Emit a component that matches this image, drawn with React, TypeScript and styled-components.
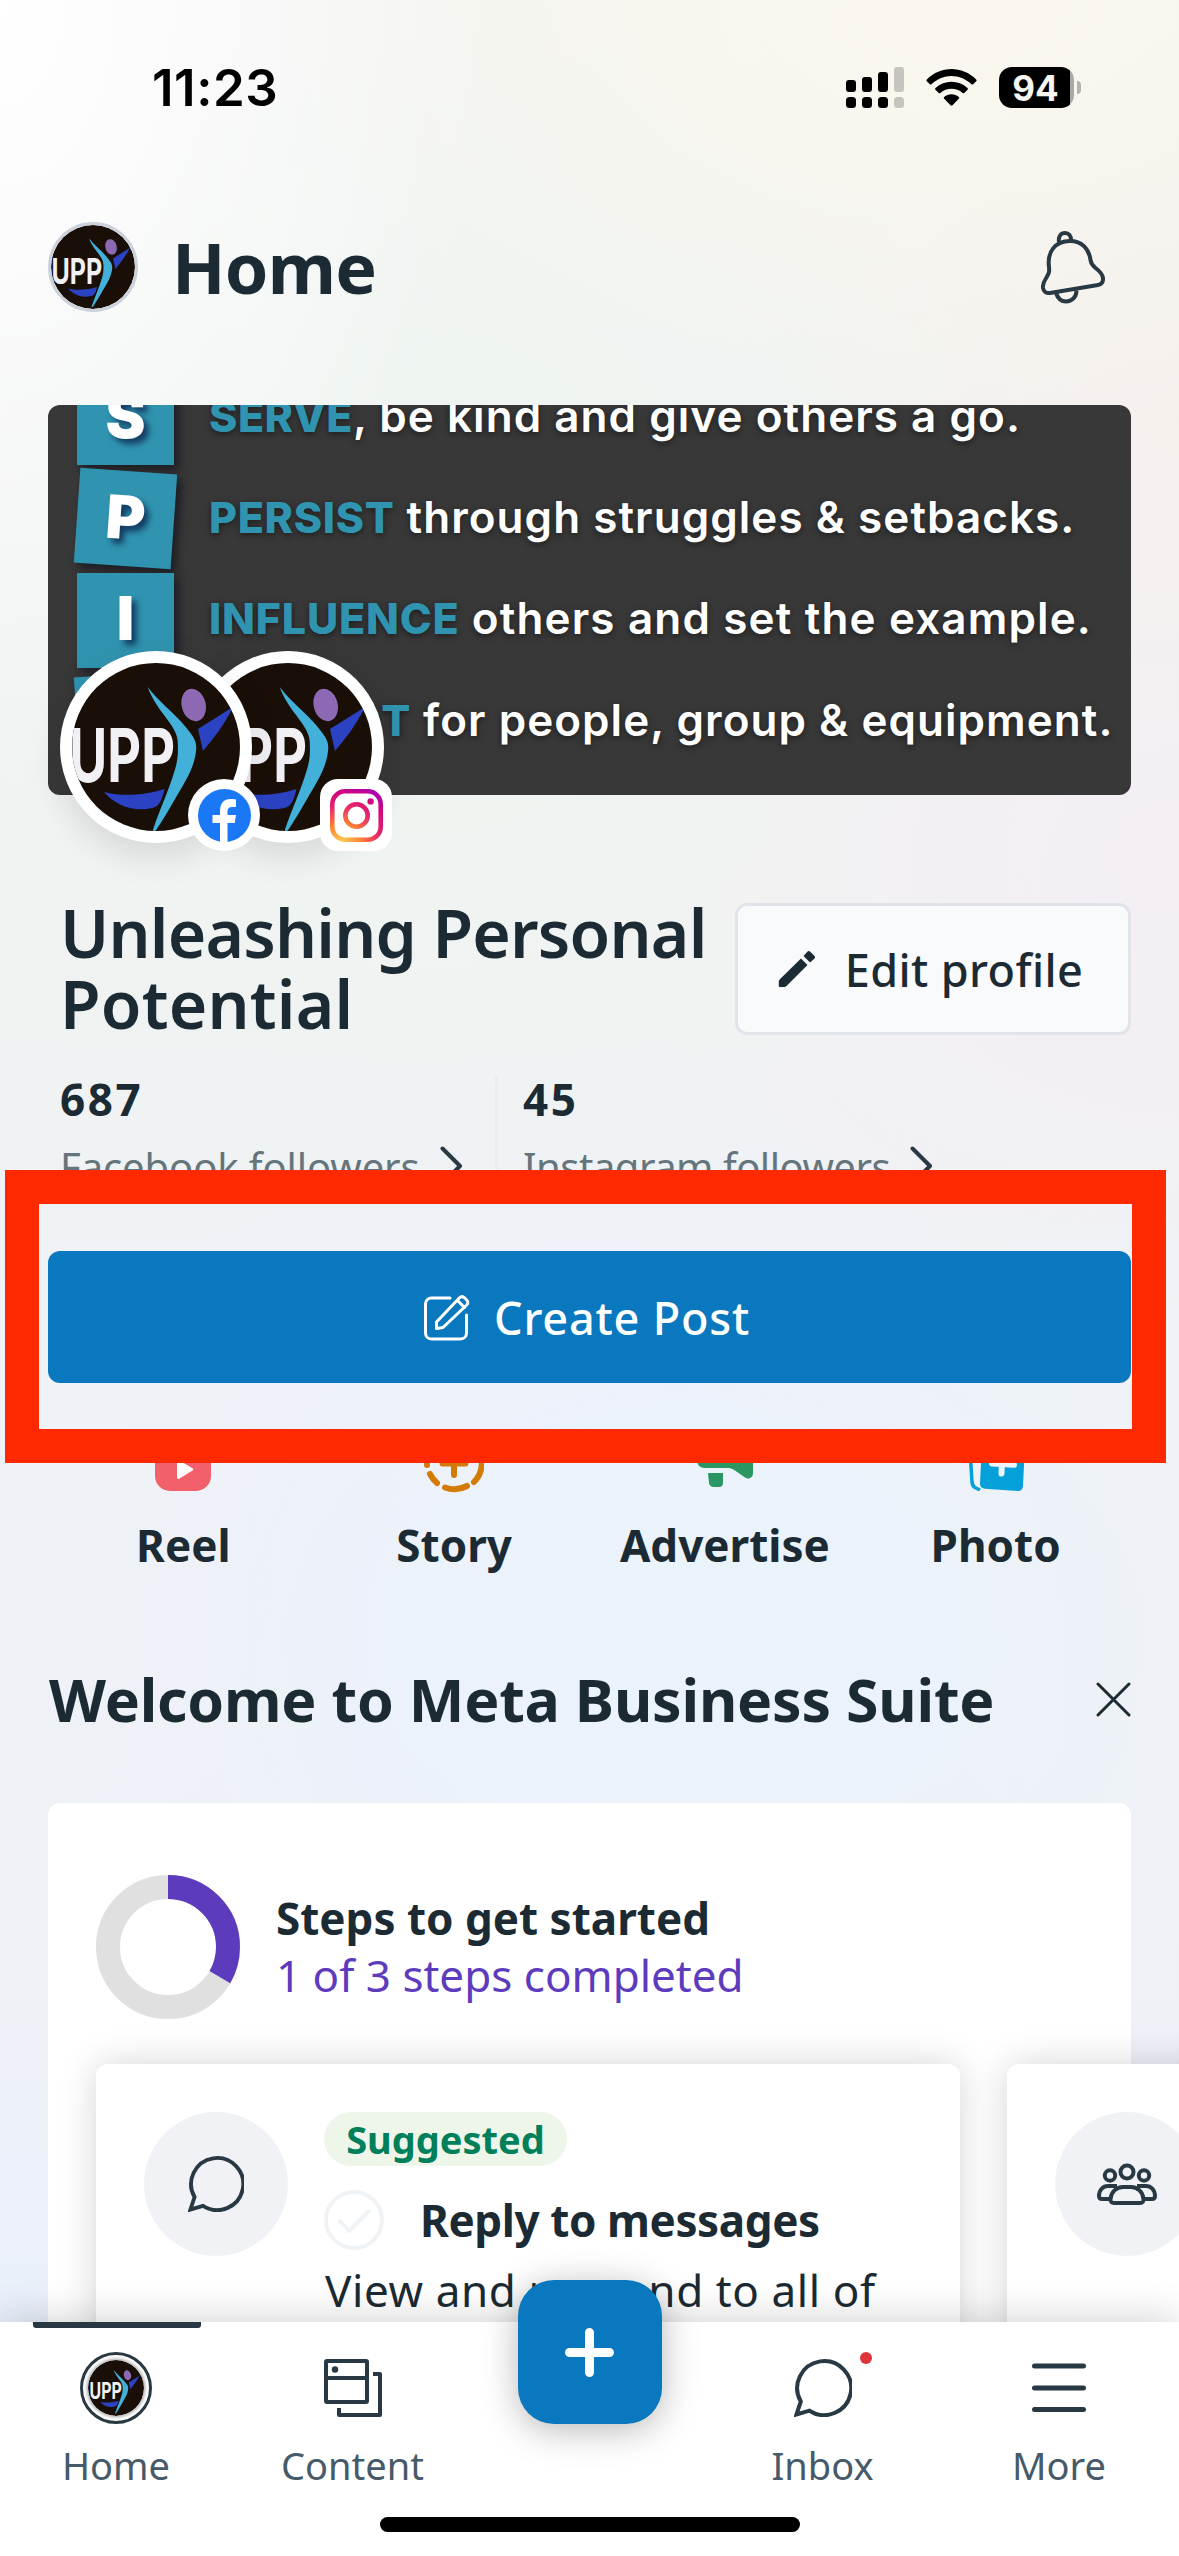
import React from 'react';
import styled, { createGlobalStyle } from 'styled-components';

// =============================================================================
// Constants
// =============================================================================

const INK = '#1c2b33';
const ICON = '#283943';
const MUTED = '#65757c';
const NAV_TEXT = '#465a69';
const BLUE = '#0a78be';
const PURPLE = '#5d3bbd';
const RED = '#ff2900';
const TEAL = '#3094b0';

const SANS = "'Noto Sans', 'Open Sans', sans-serif";
const SYSTEM = "'Inter', 'Liberation Sans', sans-serif";

// =============================================================================
// Styled Components
// =============================================================================

const GlobalStyle = createGlobalStyle`
  * {
    box-sizing: border-box;
  }

  body {
    margin: 0;
    font-family: ${SANS};
    color: ${INK};
  }

  p, h1, h2 {
    margin: 0;
  }

  svg {
    display: block;
    flex: none;
  }

  button {
    font: inherit;
    color: inherit;
    padding: 0;
    border: 0;
    background: none;
  }
`;

const Phone = styled.div`
  width: 1179px;
  height: 2556px;
  display: flex;
  flex-direction: column;
  overflow: hidden;
  background:
    radial-gradient(500px 800px at 0 0, #ffffff, rgba(255, 255, 255, 0) 100%),
    radial-gradient(700px 420px at 960px 0, #fbf7ed, rgba(251, 247, 237, 0) 100%),
    radial-gradient(380px 360px at 1179px 420px, #f6f0ed, rgba(246, 240, 237, 0) 100%),
    radial-gradient(600px 500px at 1179px 860px, #f4eef4, rgba(244, 238, 244, 0) 100%),
    radial-gradient(700px 700px at 420px 560px, #eef5f1, rgba(238, 245, 241, 0) 100%),
    radial-gradient(500px 360px at 700px 1630px, #eaf3fb, rgba(234, 243, 251, 0) 100%),
    radial-gradient(560px 700px at 590px 1720px, #edf1fb, rgba(237, 241, 251, 0) 100%),
    linear-gradient(#f3f4f2 0, #f1f2f1 900px, #eff2f6 1300px, #eef1f6 2000px, #eaf0fb 2322px);
`;

const Screen = styled.main`
  height: 2322px;
  padding: 0 48px;
  overflow: hidden;
`;

const StatusBar = styled.div`
  height: 174px;
  padding: 67px 50px 0 104px;
  display: flex;
  align-items: flex-start;
  justify-content: space-between;
  font-family: ${SYSTEM};
`;

const Clock = styled.span`
  font-size: 51px;
  font-weight: 600;
  line-height: 42px;
  letter-spacing: 0.5px;
  color: #000;
`;

const StatusIcons = styled.div`
  display: flex;
  align-items: flex-start;
  gap: 22px;
`;

const Battery = styled.div`
  display: flex;
  align-items: center;
  gap: 3px;
`;

const BatteryBody = styled.span`
  width: 75px;
  height: 41px;
  border-radius: 13px;
  background: linear-gradient(90deg, #000 71px, #a9a8a4 71px);
  color: #f6f5f0;
  font-size: 35px;
  font-weight: 700;
  line-height: 42px;
  text-align: center;
  padding-right: 2px;
`;

const BatteryCap = styled.span`
  width: 4px;
  height: 13px;
  border-radius: 0 6px 6px 0;
  background: #b5b4b0;
`;

const Header = styled.header`
  height: 186px;
  padding: 0 25px 0 0;
  display: flex;
  align-items: center;
`;

const HeaderAvatar = styled.div`
  width: 90px;
  height: 90px;
  border-radius: 50%;
  border: 3px solid #cbd2dc;
  overflow: hidden;
`;

const PageTitle = styled.h1`
  flex: 1;
  margin-left: 34px;
  font-size: 70px;
  font-weight: 700;
  line-height: 90px;
  letter-spacing: -0.8px;
`;

const CoverWrap = styled.section`
  position: relative;
  margin-top: 45px;
`;

const Cover = styled.div`
  height: 390px;
  border-radius: 12px;
  overflow: hidden;
  background: #383838;
`;

const CoverRows = styled.div`
  margin-top: -38px;
  display: flex;
  flex-direction: column;
  font-family: ${SYSTEM};
`;

const CoverRow = styled.div`
  height: 101.3px;
  padding-left: 29px;
  display: flex;
  align-items: center;
  gap: 35px;
`;

const Tile = styled.span<{ $tilt: number }>`
  width: 97px;
  height: 95px;
  flex: none;
  display: flex;
  align-items: center;
  justify-content: center;
  background: ${TEAL};
  box-shadow: 5px 5px 9px rgba(10, 12, 24, 0.6);
  color: #fff;
  font-size: 60px;
  font-weight: 900;
  line-height: 91px;
  padding-bottom: 3px;
  text-shadow: 5px 5px 6px #123a60;
  transform: rotate(${(props) => props.$tilt}deg);
`;

const CoverText = styled.p<{ $track: number }>`
  margin-bottom: 4px;
  white-space: pre;
  color: #fff;
  font-size: 44px;
  font-weight: 600;
  letter-spacing: ${(props) => props.$track}px;
  text-shadow: 0 2px 6px rgba(0, 0, 0, 0.5);
`;

const Keyword = styled.span<{ $track: number }>`
  color: ${TEAL};
  font-size: 43px;
  font-weight: 800;
  letter-spacing: ${(props) => props.$track}px;
`;

// The two account pictures hang over the bottom edge of the cover.
const Accounts = styled.div`
  position: absolute;
  left: 12px;
  top: 246px;
  display: flex;
`;

const Account = styled.div<{ $front?: boolean }>`
  position: relative;
  z-index: ${(props) => (props.$front ? 1 : 0)};
  width: 192px;
  height: 192px;
  margin-right: -60px;
  border: 12px solid #fff;
  border-radius: 50%;
  background: #fff;
  box-shadow: 0 12px 36px rgba(0, 0, 0, 0.12);
`;

const NetworkBadge = styled.span<{ $radius: number }>`
  position: absolute;
  right: -20px;
  bottom: -20px;
  width: 72px;
  height: 72px;
  display: flex;
  align-items: center;
  justify-content: center;
  border-radius: ${(props) => props.$radius}px;
  background: #fff;
`;

const Profile = styled.section`
  height: 132px;
  margin-top: 108px;
  padding-left: 12px;
  display: flex;
  align-items: center;
  justify-content: space-between;
`;

const ProfileName = styled.h2`
  margin-top: -2px;
  font-size: 66px;
  font-weight: 600;
  line-height: 71px;
`;

const NameLine = styled.span<{ $track: number }>`
  display: block;
  letter-spacing: ${(props) => props.$track}px;
  white-space: nowrap;
`;

const EditButton = styled.button`
  width: 396px;
  height: 132px;
  flex: none;
  display: flex;
  align-items: center;
  justify-content: center;
  gap: 29px;
  padding-right: 5px;
  border: 3px solid #e1e5eb;
  border-radius: 12px;
  background: #f8fafc;
  font-size: 45px;
  font-weight: 500;
  letter-spacing: 0.4px;
`;

const Stats = styled.section`
  height: 128px;
  margin-top: 34px;
  padding-left: 12px;
  display: flex;
`;

const Stat = styled.div<{ $width: number }>`
  width: ${(props) => props.$width}px;
  display: flex;
  flex-direction: column;
  gap: 8px;
`;

const Divider = styled.span`
  width: 3px;
  margin: 7px 25px 0 0;
  background: #e9edf0;
`;

const StatValue = styled.p`
  font-size: 44px;
  font-weight: 700;
  line-height: 60px;
  letter-spacing: 2.6px;
`;

const StatLabel = styled.p<{ $track: number }>`
  display: flex;
  align-items: center;
  gap: 20px;
  font-size: 40px;
  line-height: 60px;
  letter-spacing: ${(props) => props.$track}px;
  color: ${MUTED};
  white-space: nowrap;
`;

const CreateWrap = styled.section`
  position: relative;
  margin-top: 54px;
`;

const CreateButton = styled.button`
  width: 100%;
  height: 132px;
  display: flex;
  align-items: center;
  justify-content: center;
  gap: 23px;
  padding-right: 5px;
  border-radius: 12px;
  background: ${BLUE};
  color: #fff;
  font-size: 45px;
  font-weight: 500;
  letter-spacing: 0.8px;
`;

// Thick callout drawn on top of the page around the create button.
const Callout = styled.div`
  position: absolute;
  top: -81px;
  right: -35px;
  bottom: -80px;
  left: -43px;
  border: 34.5px solid ${RED};
  pointer-events: none;
`;

const Actions = styled.section`
  margin-top: 52px;
  display: grid;
  grid-template-columns: repeat(4, 1fr);
`;

const Action = styled.div`
  display: flex;
  flex-direction: column;
  align-items: center;
  gap: 24px;
  font-size: 44px;
  font-weight: 700;
  line-height: 60px;
`;

const ActionIcon = styled.span`
  width: 56px;
  height: 56px;
  display: flex;
  align-items: center;
  justify-content: center;
`;

const WelcomeRow = styled.section`
  height: 84px;
  margin-top: 82px;
  padding-left: 1px;
  display: flex;
  align-items: center;
  justify-content: space-between;
`;

const WelcomeTitle = styled.h2`
  font-size: 59px;
  font-weight: 700;
  line-height: 84px;
  letter-spacing: -0.2px;
  white-space: nowrap;
`;

const Card = styled.section`
  height: 700px;
  margin-top: 62px;
  padding: 72px 48px 0;
  border-radius: 12px;
  background: #fff;
`;

const Progress = styled.div`
  height: 144px;
  display: flex;
  align-items: center;
  gap: 36px;
  font-size: 44px;
  line-height: 57px;
`;

const ProgressTitle = styled.p`
  font-weight: 700;
`;

const ProgressText = styled.p`
  color: ${PURPLE};
`;

const Suggestions = styled.div`
  margin-top: 45px;
  display: flex;
  gap: 47px;
`;

const Suggestion = styled.article`
  width: 864px;
  height: 600px;
  flex: none;
  padding: 48px;
  display: flex;
  align-items: flex-start;
  gap: 36px;
  border-radius: 12px;
  background: #fff;
  box-shadow: 0 0 36px rgba(0, 0, 0, 0.17);
`;

const RoundIcon = styled.span`
  width: 144px;
  height: 144px;
  flex: none;
  display: flex;
  align-items: center;
  justify-content: center;
  border-radius: 50%;
  background: #f0f2f6;
`;

const SuggestionBody = styled.div`
  display: flex;
  flex-direction: column;
  align-items: flex-start;
  white-space: nowrap;
`;

const Tag = styled.span`
  width: 243px;
  height: 54px;
  border-radius: 27px;
  background: #eef6ea;
  color: #007f5b;
  font-size: 38px;
  font-weight: 700;
  line-height: 54px;
  text-align: center;
`;

const SuggestionTitle = styled.p`
  height: 60px;
  margin-top: 24px;
  display: flex;
  align-items: center;
  gap: 36px;
  font-size: 44px;
  font-weight: 700;
  letter-spacing: -0.4px;
`;

const SuggestionText = styled.p`
  margin-top: 10px;
  padding-left: 1px;
  font-size: 44px;
  line-height: 60px;
  letter-spacing: 0.6px;
`;

const Nav = styled.nav`
  position: relative;
  height: 234px;
  flex: none;
  display: flex;
  flex-direction: column;
  align-items: center;
  justify-content: space-between;
  padding-bottom: 24px;
  background: #fff;
  box-shadow: 0 0 40px rgba(0, 0, 0, 0.2);
`;

const Tabs = styled.div`
  width: 1179px;
  display: grid;
  grid-template-columns: 232px 241px 233px 233px 240px;
`;

const Tab = styled.div`
  position: relative;
  display: flex;
  flex-direction: column;
  align-items: center;
  padding-top: 30px;
  font-size: 38px;
  line-height: 54px;
  color: ${NAV_TEXT};
`;

const ActiveBar = styled.span`
  position: absolute;
  top: 0;
  left: 33px;
  width: 168px;
  height: 6px;
  border-radius: 0 0 3px 3px;
  background: ${ICON};
`;

const TabIcon = styled.span`
  width: 72px;
  height: 72px;
  margin-bottom: 14px;
  display: flex;
  align-items: center;
  justify-content: center;
`;

const TabAvatar = styled.span`
  width: 72px;
  height: 72px;
  padding: 5px;
  border: 3px solid ${ICON};
  border-radius: 50%;

  svg {
    border-radius: 50%;
    box-shadow: 0 0 4px rgba(0, 0, 0, 0.6);
  }
`;

const Unread = styled.span`
  position: absolute;
  top: 30px;
  left: 154px;
  width: 12px;
  height: 12px;
  border-radius: 50%;
  background: #dd343c;
`;

const Fab = styled.button`
  width: 144px;
  height: 144px;
  margin: -42px auto 0;
  display: flex;
  align-items: center;
  justify-content: center;
  border-radius: 36px;
  background: ${BLUE};
  box-shadow: 0 6px 36px rgba(0, 0, 0, 0.28);
`;

const HomeIndicator = styled.span`
  width: 420px;
  height: 15px;
  border-radius: 8px;
  background: #000;
`;

// =============================================================================
// Icons
// =============================================================================

const Logo = ({ size, inset = 0 }: { size: number; inset?: number }) => (
  <svg
    width={size}
    height={size}
    viewBox={`${-inset} ${-inset} ${168 + inset * 2} ${168 + inset * 2}`}
  >
    <defs>
      <clipPath id="logo-clip">
        <circle cx="84" cy="84" r="84" />
      </clipPath>
    </defs>
    <circle cx="84" cy="84" r={84 + inset} fill="#1a0f07" />
    <g clipPath={inset ? undefined : 'url(#logo-clip)'}>
      <text
        x="-3"
        y="119"
        fontFamily="Inter, sans-serif"
        fontSize="74"
        fontWeight="700"
        fill="#f1f0f5"
        textLength="106"
        lengthAdjust="spacingAndGlyphs"
      >
        UPP
      </text>
      <path d="M75.700 24c10 14 26 25 38 40 8 10 11 14 10.500 22-1 18-12 34-20 48-8 14-14 24-20 33-2 2-4 1-3-1 6-18 15-37 21-57 4-12 4-20 3.500-31C105 62 84 48 75.700 24z" fill="#43b0d9" />
      <ellipse cx="121.700" cy="42" rx="12" ry="16.500" transform="rotate(-14 121.700 42)" fill="#8d68b3" />
      <path d="M126 66l35-22c-8 17-20 32-30 44z" fill="#2b43c2" />
      <path d="M32 129c18 5 42 3 60.500-3-3 12-5 17-12 19-20 4-36-2-48.500-16z" fill="#2b43c2" />
    </g>
  </svg>
);

const SignalIcon = () => (
  <svg width="58" height="41" viewBox="0 0 58 41">
    <rect x="0" y="13" width="10" height="12" rx="3" />
    <rect x="16" y="10" width="10" height="15" rx="3" />
    <rect x="32" y="5" width="10" height="20" rx="3" />
    <rect x="48" y="0" width="10" height="25" rx="3" fill="#c5c4bf" />
    <rect x="0" y="30" width="10" height="11" rx="3.500" />
    <rect x="16" y="30" width="10" height="11" rx="3.500" />
    <rect x="32" y="30" width="10" height="11" rx="3.500" />
    <rect x="48" y="30" width="10" height="11" rx="3.500" fill="#c5c4bf" />
  </svg>
);

const WifiIcon = () => (
  <svg width="51" height="41" viewBox="0 0 51 41">
    <path d="M.8 12.500C14.500-1.500 36.500-1.500 50.200 12.500c.5.600.5 1.200 0 1.700l-3 3c-.6.500-1.200.5-1.700 0-11.500-11-28.500-11-40 0-.5.500-1.100.5-1.700 0l-3-3c-.5-.5-.5-1.100 0-1.700z" />
    <path d="M9.500 21c9-8.400 23-8.400 32 0 .6.600.6 1.200 0 1.800l-3.200 3.100c-.5.500-1.200.5-1.700 0-6.300-5.500-15.900-5.500-22.200 0-.5.500-1.200.5-1.700 0l-3.200-3.100c-.6-.6-.6-1.200 0-1.800z" />
    <path d="M18.200 30c4.200-3.700 10.400-3.700 14.600 0 .6.600.6 1.100 0 1.700l-6.300 6.600c-.6.600-1.400.6-2 0l-6.300-6.600c-.6-.6-.6-1.100 0-1.700z" />
  </svg>
);

const BellIcon = () => (
  <svg width="65" height="73" viewBox="0 0 65 73" fill="none" stroke={ICON} strokeWidth="4">
    <path d="M18 11.500C17 5 20 2 24 2c4 0 6 3 6 7" />
    <path d="M29 10c12 0 19 8 20.500 19 .5 4 2 5.500 5 8 4 3 7 6 7.500 10 .3 4-1.500 6.500-5 7L9 62c-4 .5-6.500-2-7-5-.4-4 1.200-7 3.500-10.500C8 42 8.500 41 8 36 6 21 14 10 29 10z" strokeLinejoin="round" />
    <path d="M15 62c2 6 6 8.500 10 8.500 6 0 10.500-4.500 10.500-11" />
  </svg>
);

const FacebookIcon = () => (
  <svg width="53" height="53" viewBox="0 0 53 53">
    <circle cx="26.500" cy="26.500" r="26.500" fill="#1b78f5" />
    <path d="M22 53V34h-7.500v-8H22v-3.500C22 14 26 10 32.500 10c2.500 0 4 .2 5.500.5V18h-4c-3 0-4.500 1.500-4.500 4.500V26H38l-1.300 8h-7.200v19z" fill="#fff" />
  </svg>
);

const InstagramIcon = () => (
  <svg width="53" height="53" viewBox="0 0 53 53" fill="none" stroke="url(#ig)" strokeWidth="4.600">
    <defs>
      <radialGradient id="ig" gradientUnits="userSpaceOnUse" cx="12" cy="54" r="62">
        <stop offset="0" stopColor="#ffcf52" />
        <stop offset="0.3" stopColor="#ff8433" />
        <stop offset="0.6" stopColor="#e6286a" />
        <stop offset="0.8" stopColor="#d3077c" />
        <stop offset="1" stopColor="#a800b8" />
      </radialGradient>
    </defs>
    <rect x="2.300" y="2.300" width="48.400" height="48.400" rx="13" />
    <circle cx="26.500" cy="26.500" r="11.200" />
    <circle cx="40.600" cy="12.400" r="3.200" fill="url(#ig)" stroke="none" />
  </svg>
);

const PencilIcon = () => (
  <svg width="38" height="38" viewBox="0 0 38 38" fill={INK}>
    <path d="M23 8.500l6.500 6.500L9 35.500c-1.200 1.200-2 1.500-3.500 1.500H2c-.8 0-1.200-.4-1.200-1.200V32c0-1.300.4-2 1.300-3z" />
    <path d="M25.500 6l3.800-4.200c.9-1 2-1 3 0l4 4c1 1 1 2.100 0 3L32 12.500z" />
  </svg>
);

const ChevronIcon = () => (
  <svg width="23" height="44" viewBox="0 0 23 44" fill="none" stroke={ICON} strokeWidth="4" strokeLinecap="round" strokeLinejoin="round">
    <path d="M2.500 3.500L20 21 2.500 38.500" />
  </svg>
);

const ComposeIcon = () => (
  <svg width="47" height="47" viewBox="0 0 47 47" fill="none" stroke="#fff" strokeWidth="3" strokeLinejoin="round" strokeLinecap="round">
    <path d="M26 4H7.500C4 4 1.500 6.500 1.500 10v29c0 3.500 2.500 6 6 6h29c3.500 0 6-2.500 6-6V21" />
    <path d="M12.500 28L35.500 3.800c1.500-1.500 3.500-1.500 5 0l2.200 2.200c1.500 1.500 1.500 3.500 0 5L19 33.500l-6.500 1z" />
    <path d="M33.500 6.500l7 7" />
  </svg>
);

const ReelIcon = () => (
  <svg width="56" height="56" viewBox="0 0 56 56">
    <rect width="56" height="56" rx="15" fill="#f1606b" />
    <path d="M22 27c0-1.500 1.200-2.300 2.500-1.500l13 7.700c1 .7 1 1.700 0 2.400l-13 8c-1.300.8-2.500.1-2.500-1.400z" fill="#fff" />
  </svg>
);

const StoryIcon = () => (
  <svg width="60" height="60" viewBox="0 0 60 60" fill="none" stroke="#d37b05" strokeWidth="6" strokeLinecap="round">
    <path d="M30 3a27 27 0 0 1 20 46" />
    <path d="M43 53a27 27 0 0 1-22 1.500" />
    <path d="M13 50a27 27 0 0 1-7-9" />
    <path d="M3 32a27 27 0 0 1 1-10" />
    <path d="M30 17v25M18.500 30.500h23" />
  </svg>
);

const AdvertiseIcon = () => (
  <svg width="56" height="56" viewBox="0 0 56 56" fill="#2a9662">
    <path d="M8 12h22l18-10c4-2 8 0 8 4v32c0 4.500-4 7-8 4.500l-10-7c-3-2-5-2.500-8-2.500H8c-5 0-8-3-8-8v-5c0-5 3-8 8-8z" />
    <path d="M11 38h15v10c0 2.500-1.500 4-4 4h-5c-3 0-4.500-1.200-5-4z" />
  </svg>
);

const PhotoIcon = () => (
  <svg width="58" height="56" viewBox="-2 0 58 56">
    <path d="M.5 6l2.500 41c.3 3 1.200 4.500 3 5.500l5 2.500" stroke="#03a0da" strokeWidth="3.500" fill="none" />
    <path d="M15 2l36 2c3 .2 5 2 5 5l-2 42c-.2 3-2 5-5 5l-33-2.200c-3-.2-5-2-5-5L13 7z" fill="#03a0da" />
    <path d="M33.500 14l-1 24.500M23 28.500l22 1.300" stroke="#eef2f9" strokeWidth="6" strokeLinecap="round" />
  </svg>
);

const CloseIcon = () => (
  <svg width="35" height="35" viewBox="0 0 35 35" stroke={INK} strokeWidth="3" strokeLinecap="round">
    <path d="M2 2l31 31M33 2L2 33" />
  </svg>
);

const ProgressRing = ({ value }: { value: number }) => {
  const length = 2 * Math.PI * 60;
  return (
    <svg width="144" height="144" viewBox="0 0 144 144" fill="none" strokeWidth="24">
      <circle cx="72" cy="72" r="60" stroke="#e0e0e0" />
      <circle
        cx="72"
        cy="72"
        r="60"
        stroke={PURPLE}
        strokeDasharray={`${length * value} ${length}`}
        transform="rotate(-90 72 72)"
      />
    </svg>
  );
};

const ChatIcon = ({ size = 58 }: { size?: number }) => (
  <svg width={size} height={size} viewBox="0 0 58 58" fill="none" stroke={ICON} strokeWidth="4">
    <path d="M2.500 55.500l4.300-13A27 27 0 1 1 15.500 51.700z" />
  </svg>
);

const PeopleIcon = () => (
  <svg width="60" height="42" viewBox="0 0 60 42" fill="none" stroke={ICON} strokeWidth="4">
    <circle cx="30" cy="9" r="6.500" />
    <circle cx="13" cy="12.500" r="5.200" />
    <circle cx="47" cy="12.500" r="5.200" />
    <path d="M26 24h8c6.500 0 12 5 12.500 12 .2 2.500-1 4-3.500 4H17c-2.500 0-3.700-1.500-3.500-4C14 29 19.500 24 26 24z" />
    <path d="M14 36H5c-2 0-3-1-3-3 0-6 4-10 9-10h9M46 36h9c2 0 3-1 3-3 0-6-4-10-9-10h-9" />
  </svg>
);

const CheckIcon = () => (
  <svg width="60" height="60" viewBox="0 0 60 60" fill="none" stroke="#f0f3f6" strokeWidth="4" strokeLinecap="round" strokeLinejoin="round">
    <circle cx="30" cy="30" r="28" />
    <path d="M16 31l9 10 20-20" />
  </svg>
);

const ContentIcon = () => (
  <svg width="58" height="58" viewBox="0 0 58 58" fill="none" stroke={ICON} strokeWidth="4" strokeLinejoin="round">
    <rect x="2" y="2" width="41" height="41" rx="1" />
    <path d="M2 19h41M49 15h7v41H15v-7" />
    <circle cx="11" cy="10.500" r="3.200" fill={ICON} stroke="none" />
  </svg>
);

const MenuIcon = () => (
  <svg width="54" height="50" viewBox="0 0 54 50" stroke={ICON} strokeWidth="5" strokeLinecap="round">
    <path d="M2.500 3h49M2.500 25h49M2.500 46.500h49" />
  </svg>
);

const PlusIcon = () => (
  <svg width="49" height="49" viewBox="0 0 49 49" stroke="#fff" strokeWidth="9" strokeLinecap="round">
    <path d="M24.500 4.500v40M4.500 24.500h40" />
  </svg>
);

// =============================================================================
// Data
// =============================================================================

const coverLines = [
  { letter: 'S', tilt: 0, word: 'SERVE', rest: ', be kind and give others a go.', wordTrack: 0.5, track: 1.05 },
  { letter: 'P', tilt: 4, word: 'PERSIST', rest: ' through struggles & setbacks.', wordTrack: 0.65, track: 1.05 },
  { letter: 'I', tilt: 0, word: 'INFLUENCE', rest: ' others and set the example.', wordTrack: 0.8, track: 1.15 },
  { letter: 'R', tilt: -4, word: 'RESPECT', rest: ' for people, group & equipment.', wordTrack: 0.5, track: 1.05 },
];

const nameLines = [
  { text: 'Unleashing Personal', track: -0.8 },
  { text: 'Potential', track: 0.2 },
];

const actions = [
  { label: 'Reel', icon: <ReelIcon /> },
  { label: 'Story', icon: <StoryIcon /> },
  { label: 'Advertise', icon: <AdvertiseIcon /> },
  { label: 'Photo', icon: <PhotoIcon /> },
];

// =============================================================================
// Main Component
// =============================================================================

const App = () => (
  <>
    <GlobalStyle />
    <Phone>
      <Screen>
        <StatusBar>
          <Clock>11:23</Clock>
          <StatusIcons>
            <SignalIcon />
            <WifiIcon />
            <Battery>
              <BatteryBody>94</BatteryBody>
              <BatteryCap />
            </Battery>
          </StatusIcons>
        </StatusBar>

        <Header>
          <HeaderAvatar>
            <Logo size={84} inset={4} />
          </HeaderAvatar>
          <PageTitle>Home</PageTitle>
          <BellIcon />
        </Header>

        <CoverWrap>
          <Cover>
            <CoverRows>
              {coverLines.map((line) => (
                <CoverRow key={line.letter}>
                  <Tile $tilt={line.tilt}>{line.letter}</Tile>
                  <CoverText $track={line.track}>
                    <Keyword $track={line.wordTrack}>{line.word}</Keyword>
                    {line.rest}
                  </CoverText>
                </CoverRow>
              ))}
            </CoverRows>
          </Cover>
          <Accounts>
            <Account $front>
              <Logo size={168} />
              <NetworkBadge $radius={36}>
                <FacebookIcon />
              </NetworkBadge>
            </Account>
            <Account>
              <Logo size={168} />
              <NetworkBadge $radius={18}>
                <InstagramIcon />
              </NetworkBadge>
            </Account>
          </Accounts>
        </CoverWrap>

        <Profile>
          <ProfileName>
            {nameLines.map((line) => (
              <NameLine key={line.text} $track={line.track}>
                {line.text}
              </NameLine>
            ))}
          </ProfileName>
          <EditButton>
            <PencilIcon />
            Edit profile
          </EditButton>
        </Profile>

        <Stats>
          <Stat $width={435}>
            <StatValue>687</StatValue>
            <StatLabel $track={-0.1}>
              Facebook followers
              <ChevronIcon />
            </StatLabel>
          </Stat>
          <Divider />
          <Stat $width={432}>
            <StatValue>45</StatValue>
            <StatLabel $track={-0.5}>
              Instagram followers
              <ChevronIcon />
            </StatLabel>
          </Stat>
        </Stats>

        <CreateWrap>
          <CreateButton>
            <ComposeIcon />
            Create Post
          </CreateButton>
          <Callout />
        </CreateWrap>

        <Actions>
          {actions.map((action) => (
            <Action key={action.label}>
              <ActionIcon>{action.icon}</ActionIcon>
              {action.label}
            </Action>
          ))}
        </Actions>

        <WelcomeRow>
          <WelcomeTitle>Welcome to Meta Business Suite</WelcomeTitle>
          <CloseIcon />
        </WelcomeRow>

        <Card>
          <Progress>
            <ProgressRing value={1 / 3} />
            <div>
              <ProgressTitle>Steps to get started</ProgressTitle>
              <ProgressText>1 of 3 steps completed</ProgressText>
            </div>
          </Progress>
          <Suggestions>
            <Suggestion>
              <RoundIcon>
                <ChatIcon size={56} />
              </RoundIcon>
              <SuggestionBody>
                <Tag>Suggested</Tag>
                <SuggestionTitle>
                  <CheckIcon />
                  Reply to messages
                </SuggestionTitle>
                <SuggestionText>View and respond to all of</SuggestionText>
              </SuggestionBody>
            </Suggestion>
            <Suggestion>
              <RoundIcon>
                <PeopleIcon />
              </RoundIcon>
            </Suggestion>
          </Suggestions>
        </Card>
      </Screen>

      <Nav>
        <Tabs>
          <Tab>
            <ActiveBar />
            <TabIcon>
              <TabAvatar>
                <Logo size={56} inset={8} />
              </TabAvatar>
            </TabIcon>
            Home
          </Tab>
          <Tab>
            <TabIcon>
              <ContentIcon />
            </TabIcon>
            Content
          </Tab>
          <Fab>
            <PlusIcon />
          </Fab>
          <Tab>
            <TabIcon>
              <ChatIcon />
            </TabIcon>
            Inbox
            <Unread />
          </Tab>
          <Tab>
            <TabIcon>
              <MenuIcon />
            </TabIcon>
            More
          </Tab>
        </Tabs>
        <HomeIndicator />
      </Nav>
    </Phone>
  </>
);

export default App;
